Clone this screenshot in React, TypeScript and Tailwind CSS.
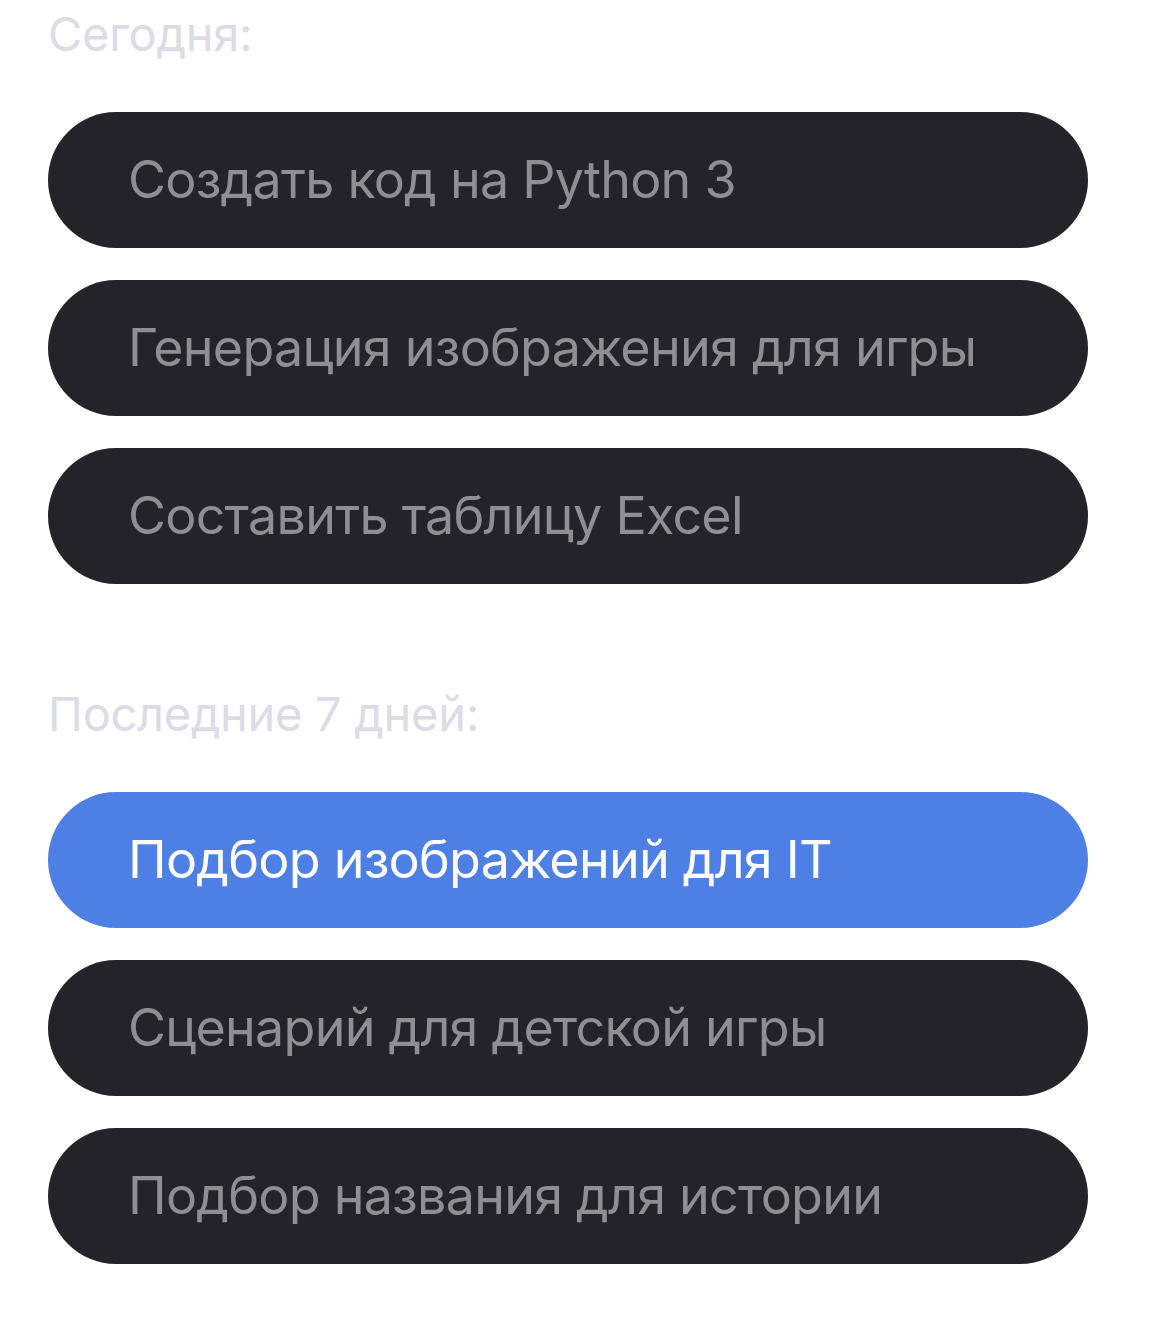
import React from "react";

type Chat = { title: string; active?: boolean };

const today: Chat[] = [
  { title: "Создать код на Python 3" },
  { title: "Генерация изображения для игры" },
  { title: "Составить таблицу Excel" },
];

const lastWeek: Chat[] = [
  { title: "Подбор изображений для IT", active: true },
  { title: "Сценарий для детской игры" },
  { title: "Подбор названия для истории" },
];

const ChatPill = ({ title, active }: Chat) => (
  <button
    className={
      "flex h-[136px] w-full items-center rounded-full pl-20 text-left text-[52px] tracking-[-0.75px] " +
      (active ? "bg-[#4d7fe4] text-white" : "bg-[#232329] text-[#8e8e93]")
    }
  >
    {title}
  </button>
);

const Group = ({ label, items }: { label: string; items: Chat[] }) => (
  <section className="flex flex-col">
    <h3 className="h-[60px] text-[47px] leading-[60px] text-[#dcdce6] tracking-[-0.3px]">{label}</h3>
    <div className="mt-12 flex flex-col gap-8">
      {items.map((c) => (
        <ChatPill key={c.title} {...c} />
      ))}
    </div>
  </section>
);

export default function App() {
  return (
    <div
      className="min-h-screen bg-white px-12 pt-[4px]"
      style={{ fontFamily: "Inter, 'Noto Sans', sans-serif" }}
    >
      <div className="flex w-[1040px] flex-col gap-[100px]">
        <Group label="Сегодня:" items={today} />
        <Group label="Последние 7 дней:" items={lastWeek} />
      </div>
    </div>
  );
}
